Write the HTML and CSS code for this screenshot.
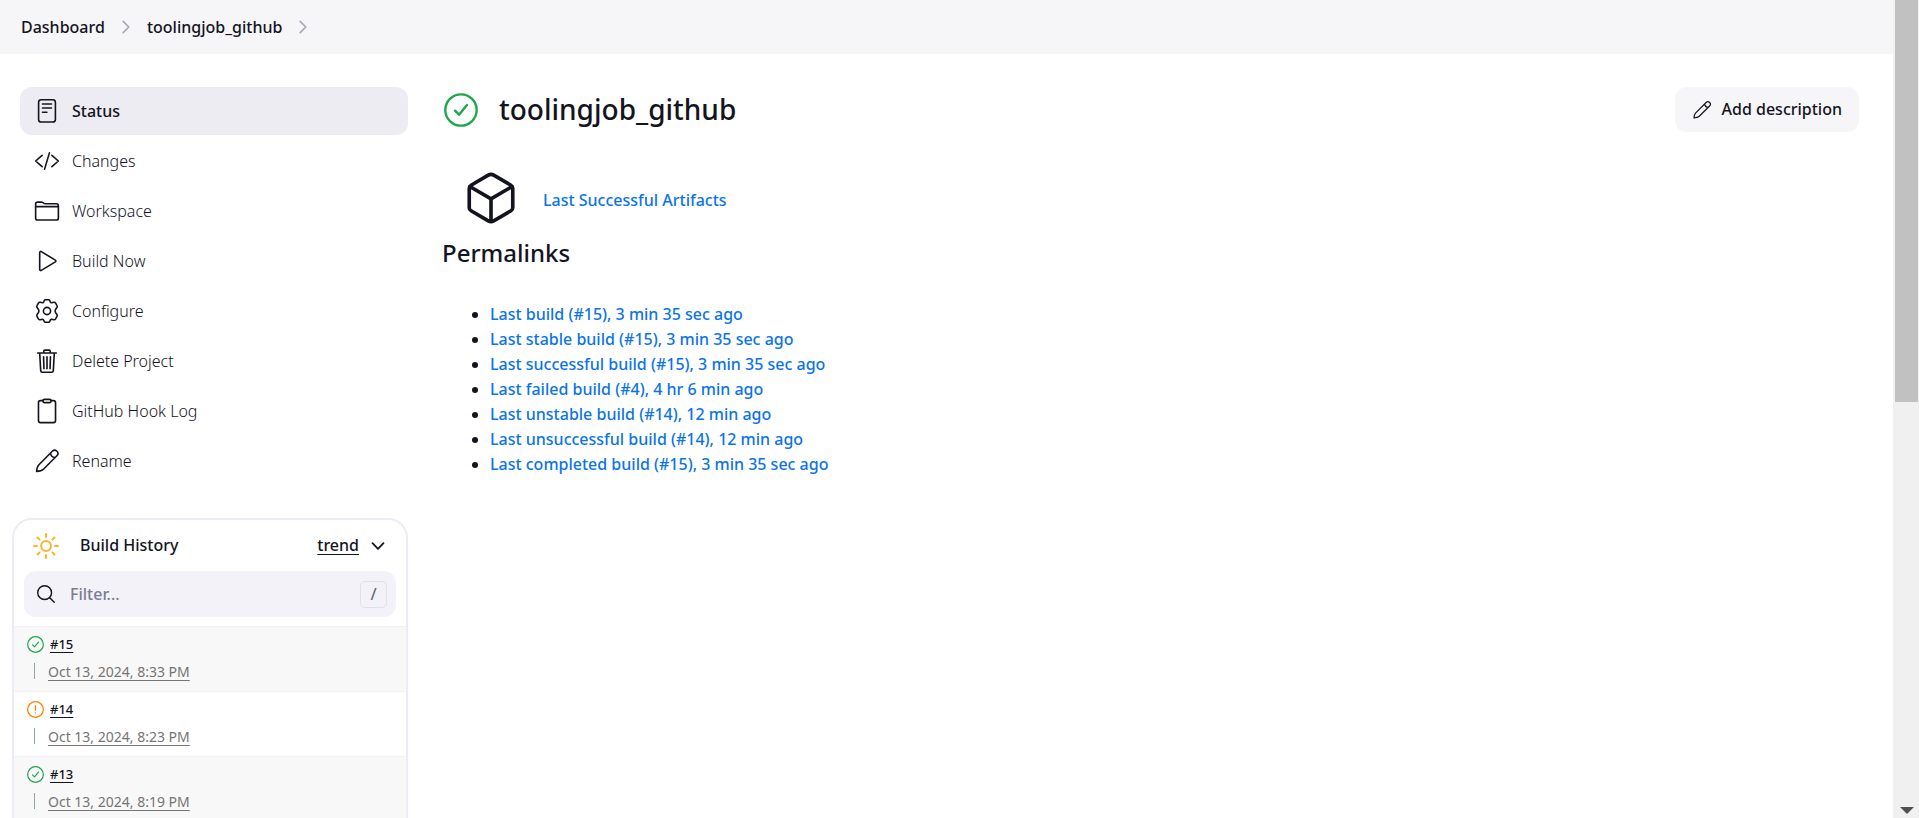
FILE: index.html
```html
<!DOCTYPE html>
<html lang="en">
<head>
<meta charset="utf-8">
<meta name="viewport" content="width=device-width, initial-scale=1">
<title>toolingjob_github [Jenkins]</title>
<link rel="stylesheet" href="styles.css">
</head>
<body>
<svg class="sprite" aria-hidden="true">
  <symbol id="chevron" viewBox="0 0 512 512"><path d="M184 112l144 144-144 144" stroke-width="44"/></symbol>
  <symbol id="pencil" viewBox="0 0 26 26"><path d="M2.600 23.400C2.800 20.600 3.300 18.300 4.900 16.700L18.300 3.200a3.250 3.250 0 0 1 4.600 4.600L9.400 21.200C7.800 22.800 5.400 23.200 2.600 23.400z M16.500 5a5 5 0 0 0 4.600 4.600"/></symbol>
  <symbol id="ok" viewBox="0 0 512 512"><circle cx="256" cy="256" r="236"/><path d="M346 182L227 326l-61-60"/></symbol>
</svg>
<div class="app">
  <div class="page">
    <nav class="breadcrumbs" aria-label="Breadcrumbs">
      <a href="#">Dashboard</a>
      <svg class="chevron"><use href="#chevron"/></svg>
      <a href="#">toolingjob_github</a>
      <svg class="chevron"><use href="#chevron"/></svg>
    </nav>
    <div class="body">
      <aside class="side">
        <nav class="tasks" aria-label="Project">
          <a class="task active" href="#"><svg class="icon" viewBox="0 0 26 26"><rect x="4.600" y="1.800" width="16.800" height="22.200" rx="2.600"/><path d="M8.500 6h9M8.500 10h9M8.500 14.200h4.400"/></svg>Status</a>
          <a class="task" href="#"><svg class="icon wide" viewBox="0 0 512 512"><path d="M160 368L32 256l128-112M352 368l128-112-128-112M304 96l-96 320"/></svg>Changes</a>
          <a class="task" href="#"><svg class="icon wide" viewBox="0 0 512 512"><path d="M440 432H72a40 40 0 01-40-40V120a40 40 0 0140-40h75.890a40 40 0 0122.190 6.720l27.840 18.560a40 40 0 0022.190 6.720H440a40 40 0 0140 40v240a40 40 0 01-40 40zM32 170h448"/></svg>Workspace</a>
          <a class="task" href="#"><svg class="icon wide" viewBox="0 0 512 512"><path d="M112 91v330c0 17.440 17 28.520 31 20.160l277.900-168.370c12.120-7.250 12.120-26.330 0-33.580L143 70.840c-14-8.360-31 2.720-31 20.160z"/></svg>Build Now</a>
          <a class="task" href="#"><svg class="icon" viewBox="0 0 26 26"><circle cx="13" cy="13" r="3.600"/><path d="M10.200 2.600Q10.500 1.800 11.400 1.800h3.200q.9 0 1.200.8l.4 1.200q.4 1.100 1.500 1l1.900-.5q1.300-.3 2 .8l1.400 2.500q.6 1-.1 1.900l-.9 1.200q-.9 1.300-.9 2.300t.9 2.300l.9 1.200q.7.900.1 1.900l-1.400 2.500q-.7 1.100-2 .8l-1.900-.5q-1.100-.1-1.500 1l-.4 1.200q-.3.800-1.200.8h-3.200q-.9 0-1.200-.8l-.4-1.200q-.4-1.100-1.500-1l-1.900.5q-1.300.3-2-.8l-1.400-2.500q-.6-1 .1-1.900l.9-1.200q.9-1.300.9-2.300t-.9-2.300l-.9-1.200q-.7-.9-.1-1.900l1.400-2.500q.7-1.100 2-.8l1.900.5q1.100.1 1.500-1z"/></svg>Configure</a>
          <a class="task" href="#"><svg class="icon wide" viewBox="0 0 512 512"><path d="M112 98l20 348c.95 18.490 14.400 32 32 32h184c17.670 0 30.870-13.510 32-32l20-348M72 98h368M192 98V66a24 24 0 0124-24h80a24 24 0 0124 24v32M256 172v236M188 172l8 236M324 172l-8 236"/></svg>Delete Project</a>
          <a class="task" href="#"><svg class="icon wide" viewBox="0 0 512 512"><path d="M336 52h48a40 40 0 0140 40v352a40 40 0 01-40 40H128a40 40 0 01-40-40V92a40 40 0 0140-40h48"/><rect x="176" y="26" width="160" height="64" rx="26"/></svg>GitHub Hook Log</a>
          <a class="task" href="#"><svg class="icon"><use href="#pencil"/></svg>Rename</a>
        </nav>
        <section class="history">
          <div class="history-head">
            <svg class="icon sun" viewBox="0 0 26 26"><circle cx="13" cy="13" r="4.900"/><path d="M13 1v3M13 22v3M1 13h3M22 13h3M4.500 4.500l2 2M19.500 19.500l2 2M4.500 21.500l2-2M19.500 6.500l2-2"/></svg>
            <h2>Build History</h2>
            <a class="trend" href="#">trend</a>
            <button class="toggle" type="button" aria-label="Collapse build history"><svg viewBox="0 0 14 14"><path d="M1.500 4.200L7 9.800l5.500-5.600"/></svg></button>
          </div>
          <label class="filter">
            <svg viewBox="0 0 512 512"><circle cx="221" cy="221" r="177"/><path d="M352 352l116 116"/></svg>
            <input type="text" placeholder="Filter..." aria-label="Filter builds">
            <kbd>/</kbd>
          </label>
          <ul class="builds">
            <li><div class="build"><svg class="state ok"><use href="#ok"/></svg><a href="#">#15</a></div><div class="when"><a href="#">Oct 13, 2024, 8:33 PM</a></div></li>
            <li><div class="build"><svg class="state warn" viewBox="0 0 512 512"><circle cx="256" cy="256" r="236"/><path d="M256 138v136M256 358v4"/></svg><a href="#">#14</a></div><div class="when"><a href="#">Oct 13, 2024, 8:23 PM</a></div></li>
            <li><div class="build"><svg class="state ok"><use href="#ok"/></svg><a href="#">#13</a></div><div class="when"><a href="#">Oct 13, 2024, 8:19 PM</a></div></li>
          </ul>
        </section>
      </aside>
      <main class="main">
        <header class="title">
          <svg class="status ok"><use href="#ok"/></svg>
          <h1>toolingjob_github</h1>
          <button class="describe" type="button"><svg><use href="#pencil"/></svg>Add description</button>
        </header>
        <div class="artifacts">
          <svg viewBox="0 0 512 512"><path d="M448 341.370V170.610A32 32 0 00432.110 143l-152-88.460a47.940 47.940 0 00-48.240 0L79.890 143A32 32 0 0064 170.610v170.760A32 32 0 0079.890 369l152 88.460a48 48 0 0048.240 0l152-88.460A32 32 0 00448 341.370zM69 154l187 110 187-110M256 464V264"/></svg>
          <a href="#">Last Successful Artifacts</a>
        </div>
        <h2 class="heading">Permalinks</h2>
        <ul class="permalinks">
          <li><a href="#">Last build (#15), 3 min 35 sec ago</a></li>
          <li><a href="#">Last stable build (#15), 3 min 35 sec ago</a></li>
          <li><a href="#">Last successful build (#15), 3 min 35 sec ago</a></li>
          <li><a href="#">Last failed build (#4), 4 hr 6 min ago</a></li>
          <li><a href="#">Last unstable build (#14), 12 min ago</a></li>
          <li><a href="#">Last unsuccessful build (#14), 12 min ago</a></li>
          <li><a href="#">Last completed build (#15), 3 min 35 sec ago</a></li>
        </ul>
      </main>
    </div>
  </div>
  <div class="scrollbar" aria-hidden="true"><div class="thumb"></div><div class="arrow"></div></div>
</div>
</body>
</html>
```
FILE: styles.css
```css
* { box-sizing: border-box; }
body {
  margin: 0;
  font: 500 16px/25px "Noto Sans", "Open Sans", sans-serif;
  color: #14141f;
  background: #fff;
}
h1, h2, ul { margin: 0; padding: 0; font-weight: 500; }
a { color: inherit; text-decoration: none; }
button { font: inherit; color: inherit; border: 0; background: none; cursor: pointer; }
svg { flex: none; fill: none; stroke: currentColor; stroke-width: 32; stroke-linecap: round; stroke-linejoin: round; }
.sprite { display: none; }

.app { display: flex; height: 100vh; overflow: hidden; }
.page { flex: 1; min-width: 0; }

.breadcrumbs { display: flex; align-items: center; gap: 11px; height: 54px; padding: 0 21px; background: #f6f6f8; }
.chevron { width: 20px; height: 20px; color: #a9a8bd; }

.body { display: flex; padding: 33px 34px 0 12px; }
.side { flex: none; width: 396px; }
.tasks { display: flex; flex-direction: column; gap: 2px; padding-left: 8px; }
.task { display: flex; align-items: center; gap: 12px; height: 48px; padding: 0 14px; border-radius: 12px; font-weight: 300; }
.task.active { background: #ececf2; font-weight: 500; }
.icon { width: 26px; height: 26px; stroke-width: 1.6; }
.icon.wide { stroke-width: 32; }

.history { margin-top: 33px; padding-bottom: 20px; border: 2px solid #ececf4; border-radius: 20px; overflow: hidden; }
.history-head { display: flex; align-items: center; height: 51px; padding: 0 21px 0 19px; }
.history-head h2 { flex: 1; padding-left: 21px; font-size: 16px; }
.icon.sun { color: #feb32b; stroke-width: 2; }
.trend { text-decoration: underline; text-underline-offset: 3px; }
.toggle { display: flex; margin-left: 12px; padding: 0; }
.toggle svg { width: 14px; height: 14px; stroke-width: 1.8; }
.filter { display: flex; align-items: center; height: 46px; margin: 0 10px 9px; padding: 0 9px 0 12px; border-radius: 12px; background: #f3f2f8; }
.filter svg { width: 20px; height: 20px; stroke-width: 36; }
.filter input { flex: 1; min-width: 0; padding: 0 0 0 14px; border: 0; outline: 0; background: none; font: inherit; }
.filter input::placeholder { color: #7d7b94; opacity: 1; }
.filter kbd { width: 27px; height: 27px; border: 1px solid #e0dfea; border-radius: 5px; font: inherit; color: #6c6a84; text-align: center; }

.builds { list-style: none; font-size: 14px; }
.builds li { height: 65px; padding: 5px 13px; border-top: 1px solid #f2f2f4; }
.builds li:nth-child(odd) { background: #f8f8f8; }
.builds a { text-decoration: underline; text-underline-offset: 3px; }
.build { display: flex; align-items: center; gap: 6px; height: 24px; font-size: 13px; }
.state { width: 17px; height: 17px; overflow: visible; }
.ok { color: #1ea64b; stroke-width: 36; }
.warn { color: #fe820a; stroke-width: 40; }
.when { display: flex; align-items: center; height: 16px; margin: 7px 0 0 7px; padding-left: 13px; border-left: 1px solid #8fa5b0; color: #757575; font-weight: 400; }

.main { flex: 1; min-width: 0; padding-left: 34px; }
.title { display: flex; align-items: center; }
.title h1 { flex: 1; padding-left: 21px; font-size: 28px; line-height: 45px; }
.status { width: 34px; height: 34px; margin-left: 2px; }
.describe { display: flex; align-items: center; gap: 10px; height: 45px; padding: 0 17px; border-radius: 12px; background: #f6f6f8; }
.describe svg { width: 20px; height: 20px; stroke-width: 1.6; }
.artifacts { display: flex; align-items: center; gap: 23px; height: 58px; margin-top: 37px; padding-left: 20px; }
.artifacts svg { width: 58px; height: 58px; }
.artifacts a { padding-top: 5px; }
.artifacts a, .permalinks a { color: #0b74e8; }
.heading { margin-top: 10px; font-size: 24px; line-height: 32px; }
.permalinks { margin-top: 33px; padding-left: 48px; }

.scrollbar { display: flex; flex-direction: column; justify-content: space-between; align-items: center; width: 26px; padding: 0 1px 4px 2px; background: #f0f0f0; }
.thumb { width: 100%; height: 402px; background: #c1c1c1; }
.arrow { border: 7px solid transparent; border-top-color: #505050; border-bottom: 0; }
```
